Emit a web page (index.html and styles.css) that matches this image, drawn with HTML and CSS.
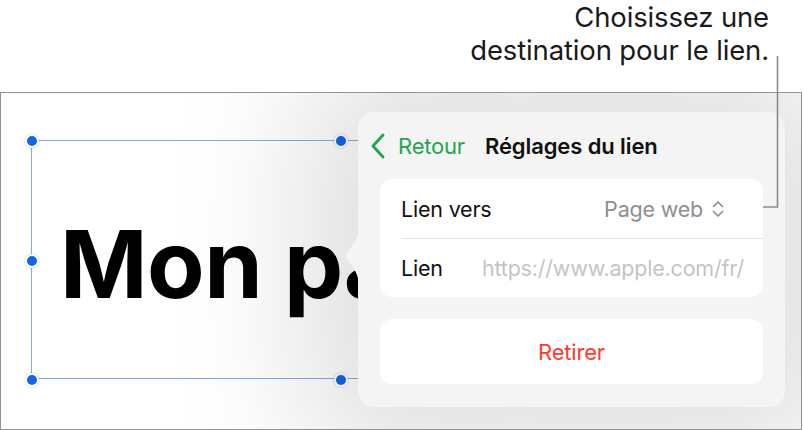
FILE: index.html
```html
<!DOCTYPE html>
<html lang="fr">
<head>
<meta charset="utf-8">
<title>Réglages du lien</title>
<link rel="stylesheet" href="styles.css">
</head>
<body>
<div class="page">
  <header class="callout">
    <p class="callout-text">Choisissez une<br>destination pour le lien.</p>
  </header>
  <section class="frame">
    <div class="textbox">
      <span class="line line-top"></span>
      <span class="line line-left"></span>
      <span class="line line-bottom"></span>
      <span class="handle h-tl"></span>
      <span class="handle h-tm"></span>
      <span class="handle h-ml"></span>
      <span class="handle h-bl"></span>
      <span class="handle h-bm"></span>
      <div class="big-text">Mon paragraphe</div>
    </div>
    <div class="popover">
      <svg class="popover-arrow" width="16" height="64" viewBox="0 0 16 64"><path d="M16 0 C16 14 11 20 5 27 Q1 32 5 37 C11 44 16 50 16 64 Z" fill="#f4f4f4"/></svg>
      <div class="pop-header">
        <button class="back">
          <svg width="16" height="26" viewBox="0 0 16 26"><path d="M13 2 L3 13 L13 24" fill="none" stroke="#1ea84c" stroke-width="2.8" stroke-linecap="round" stroke-linejoin="round"/></svg>
          <span>Retour</span>
        </button>
        <h1 class="title">Réglages du lien</h1>
      </div>
      <div class="card">
        <div class="row">
          <span class="label">Lien vers</span>
          <span class="value">Page web
            <svg class="updown" width="14" height="20" viewBox="0 0 14 20"><path d="M2.5 7.5 L7 3 L11.5 7.5 M2.5 12.5 L7 17 L11.5 12.5" fill="none" stroke="#8e8e93" stroke-width="1.7" stroke-linecap="round" stroke-linejoin="round"/></svg>
          </span>
        </div>
        <div class="row row-sep">
          <span class="label label-fixed">Lien</span>
          <span class="placeholder">https://www.apple.com/fr/</span>
        </div>
      </div>
      <div class="card card-action">
        <span class="danger">Retirer</span>
      </div>
    </div>
  </section>
  <svg class="leader" width="804" height="430" viewBox="0 0 804 430"><path d="M777.5 56 V207 H763" fill="none" stroke="#8a8a8a" stroke-width="1.6"/></svg>
</div>
</body>
</html>
```
FILE: styles.css
```css
* { box-sizing: border-box; }
html, body { margin: 0; padding: 0; background: #fff; }
body { font-family: Inter, "Noto Sans", sans-serif; color: #000; }

.page {
  position: relative;
  width: 804px;
  height: 430px;
  overflow: hidden;
}

.callout {
  height: 92px;
  display: flex;
  justify-content: flex-end;
  padding-right: 35px;
}
.callout-text {
  margin: 0;
  padding-top: 1px;
  font-size: 27.5px;
  line-height: 33px;
  text-align: right;
  color: #1a1a1a;
  letter-spacing: -0.15px;
}

.frame {
  position: relative;
  width: 802px;
  height: 338px;
  border: 1px solid #929292;
  background: #fff;
  overflow: hidden;
}

.textbox {
  position: absolute;
  left: 30px;
  top: 47px;
  width: 618px;
  height: 239px;
}
.line { position: absolute; background: #86a8ef; }
.line-top { left: 0; right: 0; top: 0; height: 1px; }
.line-bottom { left: 0; right: 0; bottom: 0; height: 1px; }
.line-left { left: 0; top: 0; bottom: 0; width: 1px; }

.handle {
  position: absolute;
  width: 14px;
  height: 14px;
  margin: -6.5px 0 0 -6.5px;
  border-radius: 50%;
  background: #1464e6;
  border: 2.5px solid #fff;
  box-shadow: 0 0 2px rgba(0,0,0,0.25);
  z-index: 2;
}
.h-tl { left: 0; top: 0; }
.h-tm { left: 309px; top: 0; }
.h-ml { left: 0; top: 120px; }
.h-bl { left: 0; top: 239px; }
.h-bm { left: 309px; top: 239px; }

.big-text {
  position: absolute;
  left: 29px;
  right: 0;
  top: 69px;
  font-size: 94px;
  font-weight: 700;
  line-height: 110px;
  white-space: nowrap;
  overflow: hidden;
  letter-spacing: -0.5px;
}

.popover {
  position: absolute;
  left: 357px;
  top: 19px;
  width: 427px;
  height: 295px;
  background: #f4f4f4;
  border-radius: 16px;
  padding: 0 22px 23px;
  box-shadow: 0 0 140px 55px rgba(0,0,0,0.13);
  z-index: 3;
}
.popover-arrow {
  position: absolute;
  left: -15px;
  top: 112px;
}

.pop-header {
  height: 67px;
  display: flex;
  align-items: center;
  margin-left: -10px;
  gap: 20px;
}
.back {
  display: flex;
  align-items: center;
  gap: 12px;
  border: 0;
  background: none;
  padding: 0;
  font: inherit;
  font-size: 22px;
  color: #1ea84c;
  letter-spacing: -0.2px;
}
.title {
  margin: 0;
  font-size: 22px;
  font-weight: 600;
  letter-spacing: -0.1px;
  color: #111;
}

.card {
  background: #fff;
  border-radius: 12px;
}
.row {
  height: 59px;
  display: flex;
  align-items: center;
  padding: 0 21px;
  font-size: 21.5px;
  letter-spacing: -0.2px;
  position: relative;
}
.row-sep::before {
  content: "";
  position: absolute;
  left: 21px;
  right: 0;
  top: -0.5px;
  height: 1px;
  background: #e4e4e6;
}
.label { color: #111; }
.label-fixed { width: 81px; flex: none; }
.value {
  margin-left: auto;
  margin-right: 17px;
  color: #8e8e93;
  display: flex;
  align-items: center;
  gap: 8px;
}
.placeholder { color: #c4c4c7; white-space: nowrap; }

.card-action {
  margin-top: 22px;
  height: 65px;
  display: flex;
  align-items: center;
  justify-content: center;
}
.danger {
  color: #ff3b30;
  font-size: 22px;
  letter-spacing: -0.2px;
}

.leader {
  position: absolute;
  left: 0;
  top: 0;
  z-index: 10;
  pointer-events: none;
}
```
